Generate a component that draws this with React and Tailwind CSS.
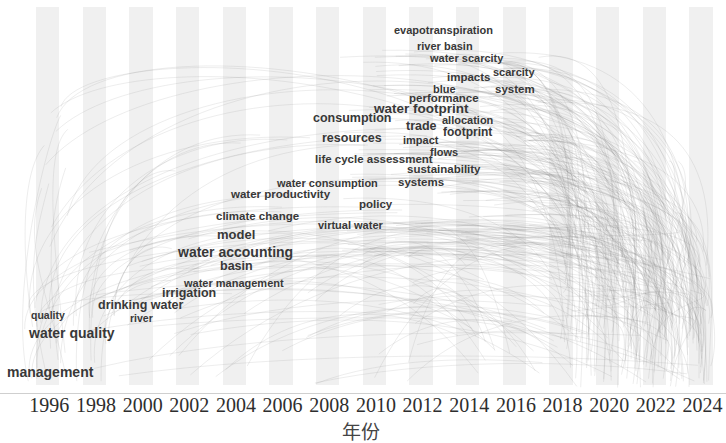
import { useMemo } from "react";

// keyword nodes: [label, left x, centre y, size class]
const labels = [
  ["evapotranspiration", 394, 30, "text-[11px]"],
  ["river basin", 417, 46, "text-[11px]"],
  ["water scarcity", 430, 58, "text-[11px]"],
  ["scarcity", 493, 72, "text-[11px]"],
  ["impacts", 447, 77, "text-[11.5px]"],
  ["blue", 433, 88.5, "text-[11px]"],
  ["system", 495, 89, "text-[11.5px]"],
  ["performance", 409, 98, "text-[11.5px]"],
  ["water footprint", 374, 109, "text-[13.5px]"],
  ["consumption", 313, 119, "text-[12.5px]"],
  ["allocation", 442, 120, "text-[11px]"],
  ["trade", 406, 127, "text-[12.5px]"],
  ["footprint", 443, 132, "text-[12px]"],
  ["resources", 322, 139, "text-[12.5px]"],
  ["impact", 403, 140, "text-[11px]"],
  ["flows", 430, 152, "text-[11px]"],
  ["life cycle assessment", 315, 159, "text-[11.5px]"],
  ["sustainability", 407, 169, "text-[11.5px]"],
  ["systems", 398, 182, "text-[11.5px]"],
  ["water consumption", 277, 183, "text-[11px]"],
  ["water productivity", 231, 194, "text-[11.5px]"],
  ["policy", 359, 204, "text-[11.5px]"],
  ["climate change", 216, 216, "text-[11.5px]"],
  ["virtual water", 318, 225, "text-[11px]"],
  ["model", 217, 235, "text-[13px]"],
  ["water accounting", 178, 252, "text-[14px]"],
  ["basin", 220, 267, "text-[12.5px]"],
  ["water management", 184, 282.5, "text-[11px]"],
  ["irrigation", 162, 294, "text-[12.5px]"],
  ["drinking water", 98, 305.5, "text-[12.5px]"],
  ["quality", 31, 316, "text-[10.5px]"],
  ["river", 130, 319, "text-[10.5px]"],
  ["water quality", 29, 333, "text-[14px]"],
  ["management", 7, 372, "text-[14px]"],
];

const years = [];
for (let y = 1996; y <= 2024; y += 2) years.push(y);

function rng(seed) {
  return () => {
    seed = (seed + 0x6d2b79f5) | 0;
    let t = Math.imul(seed ^ (seed >>> 15), 1 | seed);
    t = (t + Math.imul(t ^ (t >>> 7), 61 | t)) ^ t;
    return ((t ^ (t >>> 14)) >>> 0) / 4294967296;
  };
}

function makeLinks() {
  const r = rng(42);
  const R = (a, b) => a + (b - a) * r();
  const f = (n) => n.toFixed(1);
  const out = [];
  const c = (sx, sy, c1x, c1y, c2x, c2y, ex, ey) =>
    out.push(`M${f(sx)} ${f(sy)}C${f(c1x)} ${f(c1y)} ${f(c2x)} ${f(c2y)} ${f(ex)} ${f(ey)}`);

  // cluster -> recent years, bulging up and right
  for (let i = 0; i < 190; i++) {
    const sx = R(340, 540), sy = R(50, 260);
    const ex = R(560, 712), ey = R(230, 388);
    c(sx, sy, sx + (ex - sx) * 0.6 + R(0, 40), sy - R(0, 20), ex + R(-5, 25), sy + (ey - sy) * 0.35, ex, ey);
  }
  // early nodes -> middle, bulging up-left
  for (let i = 0; i < 28; i++) {
    const sx = R(20, 120), sy = R(300, 385);
    const ex = R(170, 430), ey = R(110, 300);
    c(sx, sy, sx - R(0, 10), sy - (sy - ey) * 0.6, sx + (ex - sx) * 0.4, ey - R(0, 10), ex, ey);
  }
  // curves along the left edge
  for (let i = 0; i < 6; i++) {
    const sx = R(25, 70), sy = R(320, 385);
    const ex = R(40, 90), ey = R(100, 200);
    c(sx, sy, sx - R(10, 25), sy - R(60, 120), ex - R(10, 25), ey + R(20, 60), ex, ey);
  }
  // big arcs over the top
  for (let i = 0; i < 8; i++) {
    const sx = R(45, 70), sy = R(100, 330);
    const ex = R(580, 712), ey = R(260, 385);
    c(sx, sy, R(80, 200), R(0, 40), R(620, 720), R(20, 90), ex, ey);
  }
  // long shallow links across the lower middle
  for (let i = 0; i < 70; i++) {
    const sx = R(80, 420), sy = R(230, 385);
    const ex = R(450, 712), ey = R(240, 388);
    const top = Math.min(sy, ey) - R(5, 50);
    c(sx, sy, sx + (ex - sx) * 0.3, top, sx + (ex - sx) * 0.7, top, ex, ey);
  }
  // short links near the right edge
  for (let i = 0; i < 50; i++) {
    const sx = R(560, 700), sy = R(150, 320);
    const ex = R(620, 712), ey = R(320, 388);
    c(sx, sy, sx + R(10, 40), sy + R(0, 30), ex + R(0, 15), ey - R(40, 80), ex, ey);
  }
  return out;
}

export default function App() {
  const links = useMemo(makeLinks, []);

  return (
    <div className="w-[726px] h-[443px] bg-white overflow-hidden flex flex-col">
      {/* timezone canvas */}
      <div className="relative h-[393px] flex-shrink-0 overflow-hidden">
        <div className="flex gap-[23.33px] pl-[36px] pt-[7px] h-full pb-[8px]">
          {years.map((y) => (
            <div key={y} className="w-[23.33px] h-full bg-[#f0f0f0] flex-shrink-0" />
          ))}
        </div>

        <svg className="absolute inset-0" width="726" height="393" viewBox="0 0 726 393">
          <g fill="none" stroke="#808080" strokeWidth="0.6" strokeOpacity="0.24">
            {links.map((d, i) => (
              <path key={i} d={d} />
            ))}
          </g>
        </svg>

        {labels.map(([text, x, y, size]) => (
          <span
            key={text}
            className={`absolute -translate-y-1/2 leading-[0.75] whitespace-nowrap font-bold text-[#383838] font-['Liberation_Sans',Arial,sans-serif] ${size}`}
            style={{ left: x, top: y }}
          >
            {text}
          </span>
        ))}
      </div>

      {/* axis */}
      <div className="border-t border-[#cfcfcf]" />
      <div className="flex pl-[26px] mt-[1px] font-['Liberation_Serif','Times_New_Roman',serif] text-[20px] leading-[20px] text-[#2e2e2e]">
        {years.map((y) => (
          <div key={y} className="w-[46.67px] flex-shrink-0 text-center">
            {y}
          </div>
        ))}
      </div>
      <div className="mt-[6px] pl-[342px] text-[19px] leading-[19px] text-[#444] font-['Noto_Sans_CJK_SC','Noto_Sans',sans-serif]">
        年份
      </div>
    </div>
  );
}
